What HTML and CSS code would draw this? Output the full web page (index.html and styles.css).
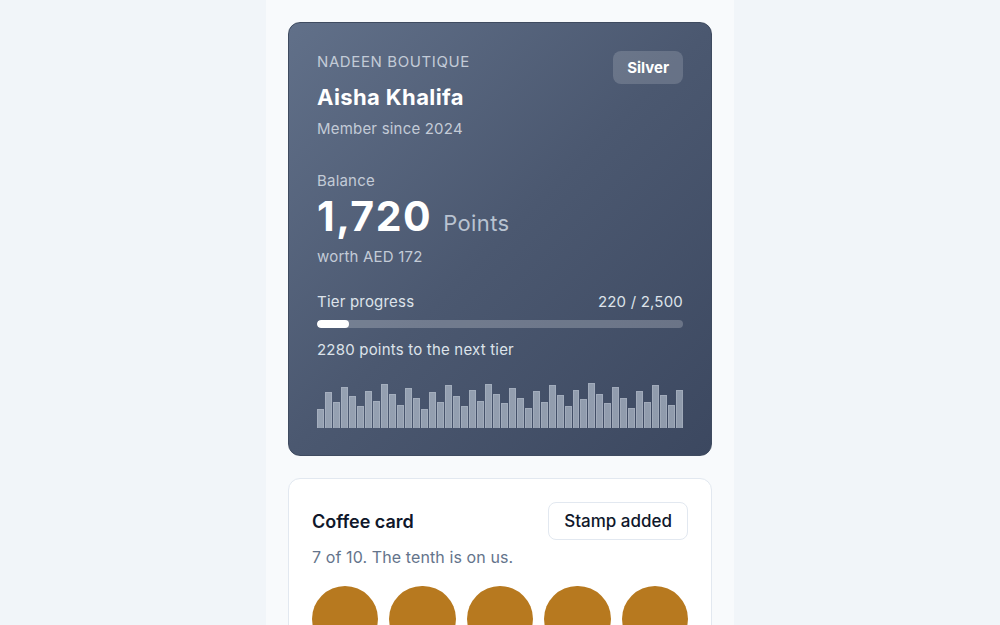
FILE: index.html
```html
<!DOCTYPE html>
<html lang="en">
<head>
    <meta charset="UTF-8">
    <meta name="viewport" content="width=device-width, initial-scale=1.0">
    <title>Nadeen Boutique Rewards</title>
    <link rel="stylesheet" href="styles.css">
</head>
<body>
    <main class="wallet">
        <section class="loyalty-card">
            <div class="card-top">
                <div>
                    <div class="brand">Nadeen Boutique</div>
                    <h1 class="member-name">Aisha Khalifa</h1>
                    <div class="member-since">Member since 2024</div>
                </div>
                <span class="tier-badge">Silver</span>
            </div>

            <div class="balance-label">Balance</div>
            <div class="balance">
                <span class="balance-value">1,720</span>
                <span class="balance-unit">Points</span>
            </div>
            <div class="balance-worth">worth AED 172</div>

            <div class="tier-row">
                <span>Tier progress</span>
                <span>220 / 2,500</span>
            </div>
            <div class="tier-track"><div class="tier-fill" style="width: 8.8%"></div></div>
            <div class="tier-note">2280 points to the next tier</div>

            <div class="barcode" id="barcode"></div>
        </section>

        <section class="stamp-card">
            <div class="stamp-head">
                <h2>Coffee card</h2>
                <button type="button">Stamp added</button>
            </div>
            <p class="stamp-sub">7 of 10. The tenth is on us.</p>
            <div class="stamps">
                <span class="stamp filled"></span>
                <span class="stamp filled"></span>
                <span class="stamp filled"></span>
                <span class="stamp filled"></span>
                <span class="stamp filled"></span>
                <span class="stamp filled"></span>
                <span class="stamp filled"></span>
                <span class="stamp"></span>
                <span class="stamp"></span>
                <span class="stamp"></span>
            </div>
        </section>
    </main>

    <script>
        // bar heights for the decorative code strip
        const heights = [18,35,25,40,31,21,36,26,43,33,22,39,29,18,35,25,42,31,21,37,26,43,33,24,39,29,19,36,25,42,32,21,37,28,44,33,24,40,29,19,36,25,42,32,22,37];
        const barcode = document.getElementById('barcode');
        heights.forEach(function(h) {
            const bar = document.createElement('span');
            bar.className = 'bar';
            bar.style.height = h + 'px';
            barcode.appendChild(bar);
        });
    </script>
</body>
</html>
```

FILE: styles.css
```css
body {
    margin: 0;
    background-color: #f1f5f9;
    font-family: Inter, "Noto Sans", sans-serif;
    color: #0f172a;
}
.wallet {
    width: 424px;
    margin: 0 auto;
    padding: 22px 22px 40px;
    background-color: #f8fafc;
    min-height: 625px;
    box-sizing: content-box;
    display: flex;
    flex-direction: column;
    gap: 22px;
}
.loyalty-card {
    padding: 28px 28px 27px;
    border-radius: 12px;
    border: 1px solid #3f4b60;
    background: linear-gradient(135deg, #617089 0%, #4b5870 50%, #3c4860 100%);
    color: #fff;
    letter-spacing: 0.2px;
}
.card-top {
    display: flex;
    justify-content: space-between;
    align-items: flex-start;
}
.brand {
    font-size: 15px;
    line-height: 22px;
    text-transform: uppercase;
    letter-spacing: 0.6px;
    color: #c3cbd7;
}
.member-name {
    margin: 10px 0 0;
    font-size: 22px;
    line-height: 28px;
    font-weight: 700;
    letter-spacing: 0.4px;
}
.member-since {
    margin-top: 7px;
    font-size: 15px;
    line-height: 22px;
    color: #c3cbd7;
}
.tier-badge {
    padding: 6px 14px;
    border-radius: 8px;
    background-color: rgba(255, 255, 255, 0.16);
    font-size: 15px;
    line-height: 21px;
    font-weight: 700;
    letter-spacing: 0;
}
.balance-label {
    margin-top: 30px;
    font-size: 15px;
    line-height: 22px;
    color: #c3cbd7;
}
.balance {
    display: flex;
    align-items: baseline;
    gap: 11px;
    height: 48px;
}
.balance-value {
    font-size: 41px;
    line-height: 48px;
    font-weight: 700;
    letter-spacing: 1.5px;
}
.balance-unit {
    font-size: 22px;
    letter-spacing: 0.4px;
    color: #b9c3d1;
}
.balance-worth {
    margin-top: 6px;
    font-size: 15px;
    line-height: 22px;
    color: #c3cbd7;
}
.tier-row {
    margin-top: 23px;
    display: flex;
    justify-content: space-between;
    font-size: 15px;
    line-height: 22px;
    color: #dde3ea;
}
.tier-track {
    margin-top: 7px;
    height: 8px;
    border-radius: 4px;
    background-color: rgba(255, 255, 255, 0.22);
    overflow: hidden;
}
.tier-fill {
    height: 100%;
    border-radius: 4px;
    background-color: #fff;
}
.tier-note {
    margin-top: 11px;
    font-size: 15px;
    line-height: 22px;
    color: #dde3ea;
}
.barcode {
    margin-top: 19px;
    height: 48px;
    display: flex;
    align-items: flex-end;
    gap: 1px;
}
.bar {
    flex: 1;
    background-color: rgba(203, 213, 225, 0.58);
    border: 1px solid rgba(226, 232, 240, 0.2);
    border-bottom: none;
}
.stamp-card {
    padding: 23px;
    border-radius: 12px;
    border: 1px solid #e2e8f0;
    background-color: #fff;
}
.stamp-head {
    display: flex;
    justify-content: space-between;
    align-items: center;
}
.stamp-head h2 {
    margin: 0;
    font-size: 18px;
    font-weight: 600;
    color: #0f172a;
}
.stamp-head button {
    height: 38px;
    padding: 0 15px;
    border: 1px solid #e2e8f0;
    border-radius: 8px;
    background-color: #fff;
    font-family: inherit;
    font-size: 17px;
    font-weight: 500;
    color: #0f172a;
}
.stamp-sub {
    margin: 5px 0 0;
    font-size: 16px;
    line-height: 24px;
    letter-spacing: 0.1px;
    color: #64748b;
}
.stamps {
    margin-top: 17px;
    display: grid;
    grid-template-columns: repeat(5, 1fr);
    gap: 11px;
}
.stamp {
    aspect-ratio: 1;
    border-radius: 50%;
    border: 2px dashed #cbd5e1;
    box-sizing: border-box;
}
.stamp.filled {
    border: none;
    background-color: #b7791f;
}
```
